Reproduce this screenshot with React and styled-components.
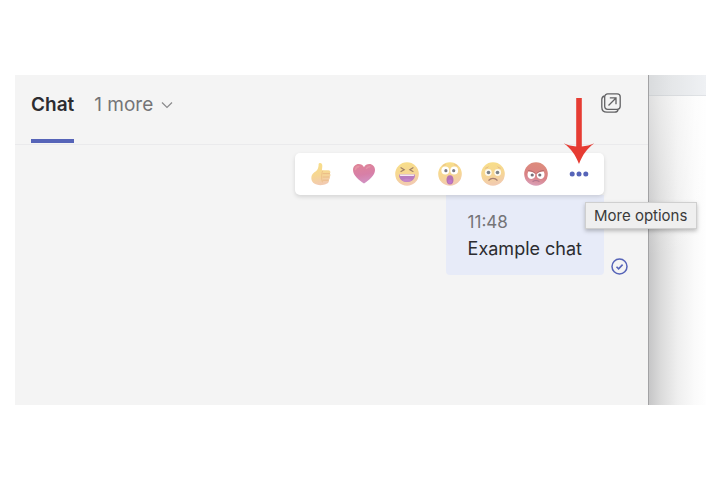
import styled, { createGlobalStyle } from "styled-components";

const palette = {
  brand: "#5664b8",
  text: "#2c2c30",
  muted: "#747477",
  panel: "#f4f4f4",
  line: "#eaeaec",
  bubble: "#e7ebf8",
  red: "#e63c33",
};

const GlobalStyle = createGlobalStyle`
  * {
    box-sizing: border-box;
  }
  body {
    margin: 0;
    background: #fff;
    color: ${palette.text};
    font-family: Inter, "Liberation Sans", sans-serif;
  }
  button {
    margin: 0;
    padding: 0;
    border: none;
    background: none;
    color: inherit;
    font: inherit;
    cursor: pointer;
  }
  svg {
    display: block;
    flex: none;
  }
`;

const Page = styled.div`
  padding: 75px 14px 75px 15px;
`;
const Frame = styled.div`
  display: grid;
  grid-template-columns: 1fr 57px;
`;
const Panel = styled.main`
  background: ${palette.panel};
  border-right: 1px solid #a2a2a4;
`;
const Header = styled.header`
  display: flex;
  justify-content: space-between;
  align-items: flex-start;
  height: 70px;
  padding: 0 27px 0 16px;
  border-bottom: 1px solid ${palette.line};
`;
const Tabs = styled.nav`
  display: flex;
  height: 68px;
  gap: 20px;
`;
const Tab = styled.button`
  display: flex;
  align-items: flex-start;
  gap: 8px;
  && {
    padding-top: 18px;
    font-size: 19px;
    line-height: 24px;
    font-weight: ${({ $active }) => ($active ? 600 : 400)};
    color: ${({ $active }) => ($active ? palette.text : palette.muted)};
    border-bottom: 4px solid ${({ $active }) => ($active ? palette.brand : "transparent")};
  }
  svg {
    margin-top: 8px;
  }
`;
const PopOutButton = styled.button`
  margin-top: 18px;
`;
const MessageList = styled.section`
  min-height: 260px;
  padding: 8px 20px 0 16px;
`;
const Message = styled.article`
  display: flex;
  justify-content: flex-end;
  align-items: flex-end;
  gap: 7px;
`;
const MessageBody = styled.div`
  display: flex;
  flex-direction: column;
  align-items: flex-end;
`;
const Toolbar = styled.div`
  position: relative;
  display: flex;
  height: 42px;
  padding: 0 4px;
  border-radius: 5px;
  background: #fff;
  box-shadow: 0 2px 4px rgba(0, 0, 0, 0.13);
`;
const ToolButton = styled.button`
  display: flex;
  align-items: center;
  justify-content: center;
  width: 43px;
  color: ${palette.brand};
`;
const MoreAction = styled.div`
  position: relative;
  display: flex;
`;
const Pointer = styled.svg`
  position: absolute;
  left: 6px;
  bottom: 31px;
`;
const Tooltip = styled.div`
  position: absolute;
  top: 49px;
  left: 28px;
  padding: 3px 9px 3px 8px;
  border: 1px solid #cfcfcf;
  background: #efefef;
  box-shadow: 0 2px 4px rgba(0, 0, 0, 0.25);
  font-size: 15px;
  line-height: 19px;
  white-space: nowrap;
  color: #3a3a3a;
`;
const Bubble = styled.div`
  padding: 14px 22px 12px;
  border-radius: 0 0 4px 4px;
  background: ${palette.bubble};
  time {
    display: block;
    font-size: 17px;
    line-height: 26px;
    color: ${palette.muted};
  }
  p {
    margin: 0;
    font-size: 18px;
    line-height: 28px;
  }
`;
const Backdrop = styled.aside`
  background:
    linear-gradient(180deg, rgba(255, 255, 255, 0.5), rgba(255, 255, 255, 0) 55%),
    linear-gradient(90deg, #c6c6c7 0, #dadada 20%, #efefef 50%, #fafafa 80%, #fefefe 100%);
`;
const BackdropBar = styled.div`
  height: 21px;
  border-bottom: 1px solid rgba(120, 130, 140, 0.12);
  background: linear-gradient(90deg, #d9dbdd, #e5e7e9 40%, #eff1f4);
`;

const EmojiDefs = () => (
  <svg width="0" height="0" style={{ position: "absolute" }} aria-hidden="true">
    <defs>
      <linearGradient id="yellow" x1="0" y1="0" x2="0.2" y2="1">
        <stop offset="0" stopColor="#f8df88" />
        <stop offset="0.6" stopColor="#f6d694" />
        <stop offset="1" stopColor="#f2cbb0" />
      </linearGradient>
      <linearGradient id="angry" x1="0.6" y1="0" x2="0.4" y2="1">
        <stop offset="0" stopColor="#dd8c7b" />
        <stop offset="0.6" stopColor="#d98184" />
        <stop offset="1" stopColor="#d9a1ba" />
      </linearGradient>
      <linearGradient id="heart" x1="0.3" y1="0" x2="0.5" y2="1">
        <stop offset="0" stopColor="#df8498" />
        <stop offset="0.55" stopColor="#d77fa7" />
        <stop offset="1" stopColor="#d193c4" />
      </linearGradient>
    </defs>
  </svg>
);

const ThumbUp = () => (
  <svg width="24" height="24" viewBox="0 0 24 24">
    <path
      d="M10.2 1.2c2-.7 3.4.8 3.1 3.2L12.900 8.300h6.300c2.200 0 2.700 2.100 1.700 3.200 1 1.200.7 2.700-.3 3.300.6 1.300.1 2.600-.8 3.100.5 1.400-.3 3-1.700 3.600-3.500 2-8.800 2.200-12 .6C3 20.600 2 17.800 2.400 14.800c.4-2.700 2.500-4.200 4.500-5.600 2-1.500 2.500-3.900 2.700-5.900 0-.9 0-1.800.6-2.100Z"
      fill="url(#yellow)"
    />
    <path d="M14 11.600h6.500M14 15h6.300M14 18.200h5.300" stroke="#e9b984" strokeWidth="0.9" strokeLinecap="round" />
    <path d="M13.800 8.600c-1.400 2-1.700 8.400-.4 11.700" fill="none" stroke="#ecbd86" strokeWidth="0.8" />
  </svg>
);

const Heart = () => (
  <svg width="24" height="24" viewBox="0 0 24 24">
    <path
      d="M12 21.500C7 18.100 1 13.500 1 8c0-3.500 2.600-5.900 5.700-5.900 2.300 0 4.200 1.200 5.300 3.100 1.100-1.900 3-3.100 5.300-3.100C20.400 2.100 23 4.500 23 8c0 5.500-6 10.100-11 13.500Z"
      fill="url(#heart)"
    />
    <path d="M3.500 7.500c.2-1.700 1.500-2.800 3.200-2.900" stroke="#e595a4" strokeWidth="1.600" strokeLinecap="round" fill="none" />
    <path d="M14.500 6.400c.7-1 1.900-1.700 3.300-1.700" stroke="#e294a8" strokeWidth="1.400" strokeLinecap="round" fill="none" />
  </svg>
);

const Laugh = () => (
  <svg width="24" height="24" viewBox="0 0 24 24">
    <circle cx="12" cy="12" r="11.800" fill="url(#yellow)" />
    <path d="m6 5.700 3.200 2L6 9.500M18 5.700l-3.200 2L18 9.500" stroke="#9f8069" strokeWidth="1.200" fill="none" strokeLinecap="round" />
    <path d="M4 12.400h16c.3 4.500-3.300 7.500-8 7.500s-8.300-3-8-7.500Z" fill="#b97cbe" />
    <path d="M4.600 12.400h14.800c0 1.300-.6 1.500-1.500 1.500H6.100c-.9 0-1.500-.2-1.500-1.500Z" fill="#f4eaf0" />
    <path d="M7 18.200c2.500-2 7.500-2 10 0-2.700 2.200-7.300 2.200-10 0Z" fill="#c486c9" />
  </svg>
);

const Surprised = () => (
  <svg width="24" height="24" viewBox="0 0 24 24">
    <circle cx="12" cy="12" r="11.800" fill="url(#yellow)" />
    <circle cx="7.300" cy="8.500" r="3.900" fill="#fff" />
    <circle cx="16.200" cy="8.500" r="3.900" fill="#fff" />
    <circle cx="7.900" cy="8.700" r="1.600" fill="#7d7b85" />
    <circle cx="15.700" cy="8.700" r="1.600" fill="#7d7b85" />
    <path d="M4.500 4.100c.9-1 2-1.400 3.200-1.300M19.500 4.100c-.9-1-2-1.400-3.200-1.300" stroke="#e6b98a" fill="none" />
    <path d="M12 13.300c2.300 0 3.500 1.800 3.500 4.600 0 2.700-1.200 4.600-3.500 4.600s-3.500-1.900-3.500-4.600c0-2.800 1.200-4.600 3.500-4.600Z" fill="#b572b2" />
    <ellipse cx="12" cy="19.600" rx="2.200" ry="2.200" fill="#bf78cb" />
  </svg>
);

const Sad = () => (
  <svg width="24" height="24" viewBox="0 0 24 24">
    <circle cx="12" cy="12" r="11.800" fill="url(#yellow)" />
    <circle cx="7.300" cy="10.500" r="3.400" fill="#fdf9ef" />
    <circle cx="16.700" cy="10.500" r="3.400" fill="#fdf9ef" />
    <circle cx="7.500" cy="10.500" r="1.800" fill="#7c8289" />
    <circle cx="16.500" cy="10.500" r="1.800" fill="#7c8289" />
    <path d="M4.300 6.300c1.300-.2 2.300-.7 3.100-1.600M19.700 6.300c-1.300-.2-2.300-.7-3.100-1.600" stroke="#e3b888" fill="none" />
    <path d="M8 18.200c1.800-2.500 6.200-2.500 8 0" stroke="#a77e71" strokeWidth="1.400" fill="none" strokeLinecap="round" />
  </svg>
);

const Angry = () => (
  <svg width="24" height="24" viewBox="0 0 24 24">
    <circle cx="12" cy="12" r="11.800" fill="url(#angry)" />
    <path d="M4.200 9.700c1.300-.5 6.200.6 7.100 2.500.2 2.900-1.400 4.700-3.800 4.700s-4-1.600-4-4.200c0-1.100.2-2.200.7-3ZM19.800 9.700c-1.300-.5-6.200.6-7.100 2.500-.2 2.900 1.400 4.700 3.800 4.700s4-1.600 4-4.200c0-1.100-.2-2.200-.7-3Z" fill="#fff" />
    <circle cx="8.200" cy="13" r="1.600" fill="#77717a" />
    <circle cx="15.800" cy="13" r="1.600" fill="#77717a" />
    <path d="M4.500 8.500c2.600.2 4.900.9 6.600 2.700M19.500 8.500c-2.600.2-4.900.9-6.600 2.700" stroke="#b06a6c" strokeWidth="0.9" fill="none" strokeLinecap="round" />
    <path d="M9 19.400c1.400-1.200 4.600-1.200 6 0" stroke="#b0758f" strokeWidth="1.200" fill="none" strokeLinecap="round" />
  </svg>
);

const reactions = [
  { name: "Like", Icon: ThumbUp },
  { name: "Heart", Icon: Heart },
  { name: "Laugh", Icon: Laugh },
  { name: "Surprised", Icon: Surprised },
  { name: "Sad", Icon: Sad },
  { name: "Angry", Icon: Angry },
];

const App = () => {
  return (
    <Page>
      <GlobalStyle />
      <EmojiDefs />
      <Frame>
        <Panel>
          <Header>
            <Tabs>
              <Tab $active>Chat</Tab>
              <Tab>
                1 more
                <svg width="12" height="8" viewBox="0 0 12 8" fill="none" stroke="#8a8a8c" strokeWidth="1.200">
                  <path d="m1 1.500 5 5 5-5" />
                </svg>
              </Tab>
            </Tabs>
            <PopOutButton aria-label="Pop out chat">
              <svg width="20" height="20" viewBox="0 0 20 20" fill="none" stroke="#626264" strokeWidth="1.300">
                <rect x="3.700" y="0.800" width="15.500" height="15.500" rx="3" />
                <path d="M3.500 3C1.700 3.500.8 4.600.8 6.500V14c0 3.500 1.700 5.200 5.200 5.200h7.500c1.900 0 3.200-.9 3.600-2.700" />
                <path d="m7.500 12.500 7.500-7.500M8.800 4.900H15v6.300" />
              </svg>
            </PopOutButton>
          </Header>
          <MessageList>
            <Message>
              <MessageBody>
                <Toolbar>
                  {reactions.map(({ name, Icon }) => (
                    <ToolButton key={name} aria-label={name}>
                      <Icon />
                    </ToolButton>
                  ))}
                  <MoreAction>
                    <ToolButton aria-label="More options" aria-describedby="more-tip">
                      <svg width="20" height="6" viewBox="0 0 20 6" fill="currentColor">
                        <circle cx="3.200" cy="3" r="2.500" />
                        <circle cx="10" cy="3" r="2.500" />
                        <circle cx="16.800" cy="3" r="2.500" />
                      </svg>
                    </ToolButton>
                    <Pointer width="32" height="66" viewBox="0 0 32 66" fill={palette.red}>
                      <path d="M13.200 0h5.600v48.500c4.500-.3 8.500-1.300 12.500-3.200C24 50.500 19.500 57 16 66 12.500 57 8 50.500.7 45.300c4 1.900 8 2.900 12.500 3.200Z" />
                    </Pointer>
                    <Tooltip id="more-tip" role="tooltip">More options</Tooltip>
                  </MoreAction>
                </Toolbar>
                <Bubble>
                  <time>11:48</time>
                  <p>Example chat</p>
                </Bubble>
              </MessageBody>
              <svg width="17" height="17" viewBox="0 0 17 17" fill="none" stroke={palette.brand} role="img" aria-label="Sent">
                <circle cx="8.500" cy="8.500" r="7.500" strokeWidth="1.500" />
                <path d="m5.500 8.700 2.100 2.100 4-4.200" strokeWidth="1.600" />
              </svg>
            </Message>
          </MessageList>
        </Panel>
        <Backdrop>
          <BackdropBar />
        </Backdrop>
      </Frame>
    </Page>
  );
};

export default App;
